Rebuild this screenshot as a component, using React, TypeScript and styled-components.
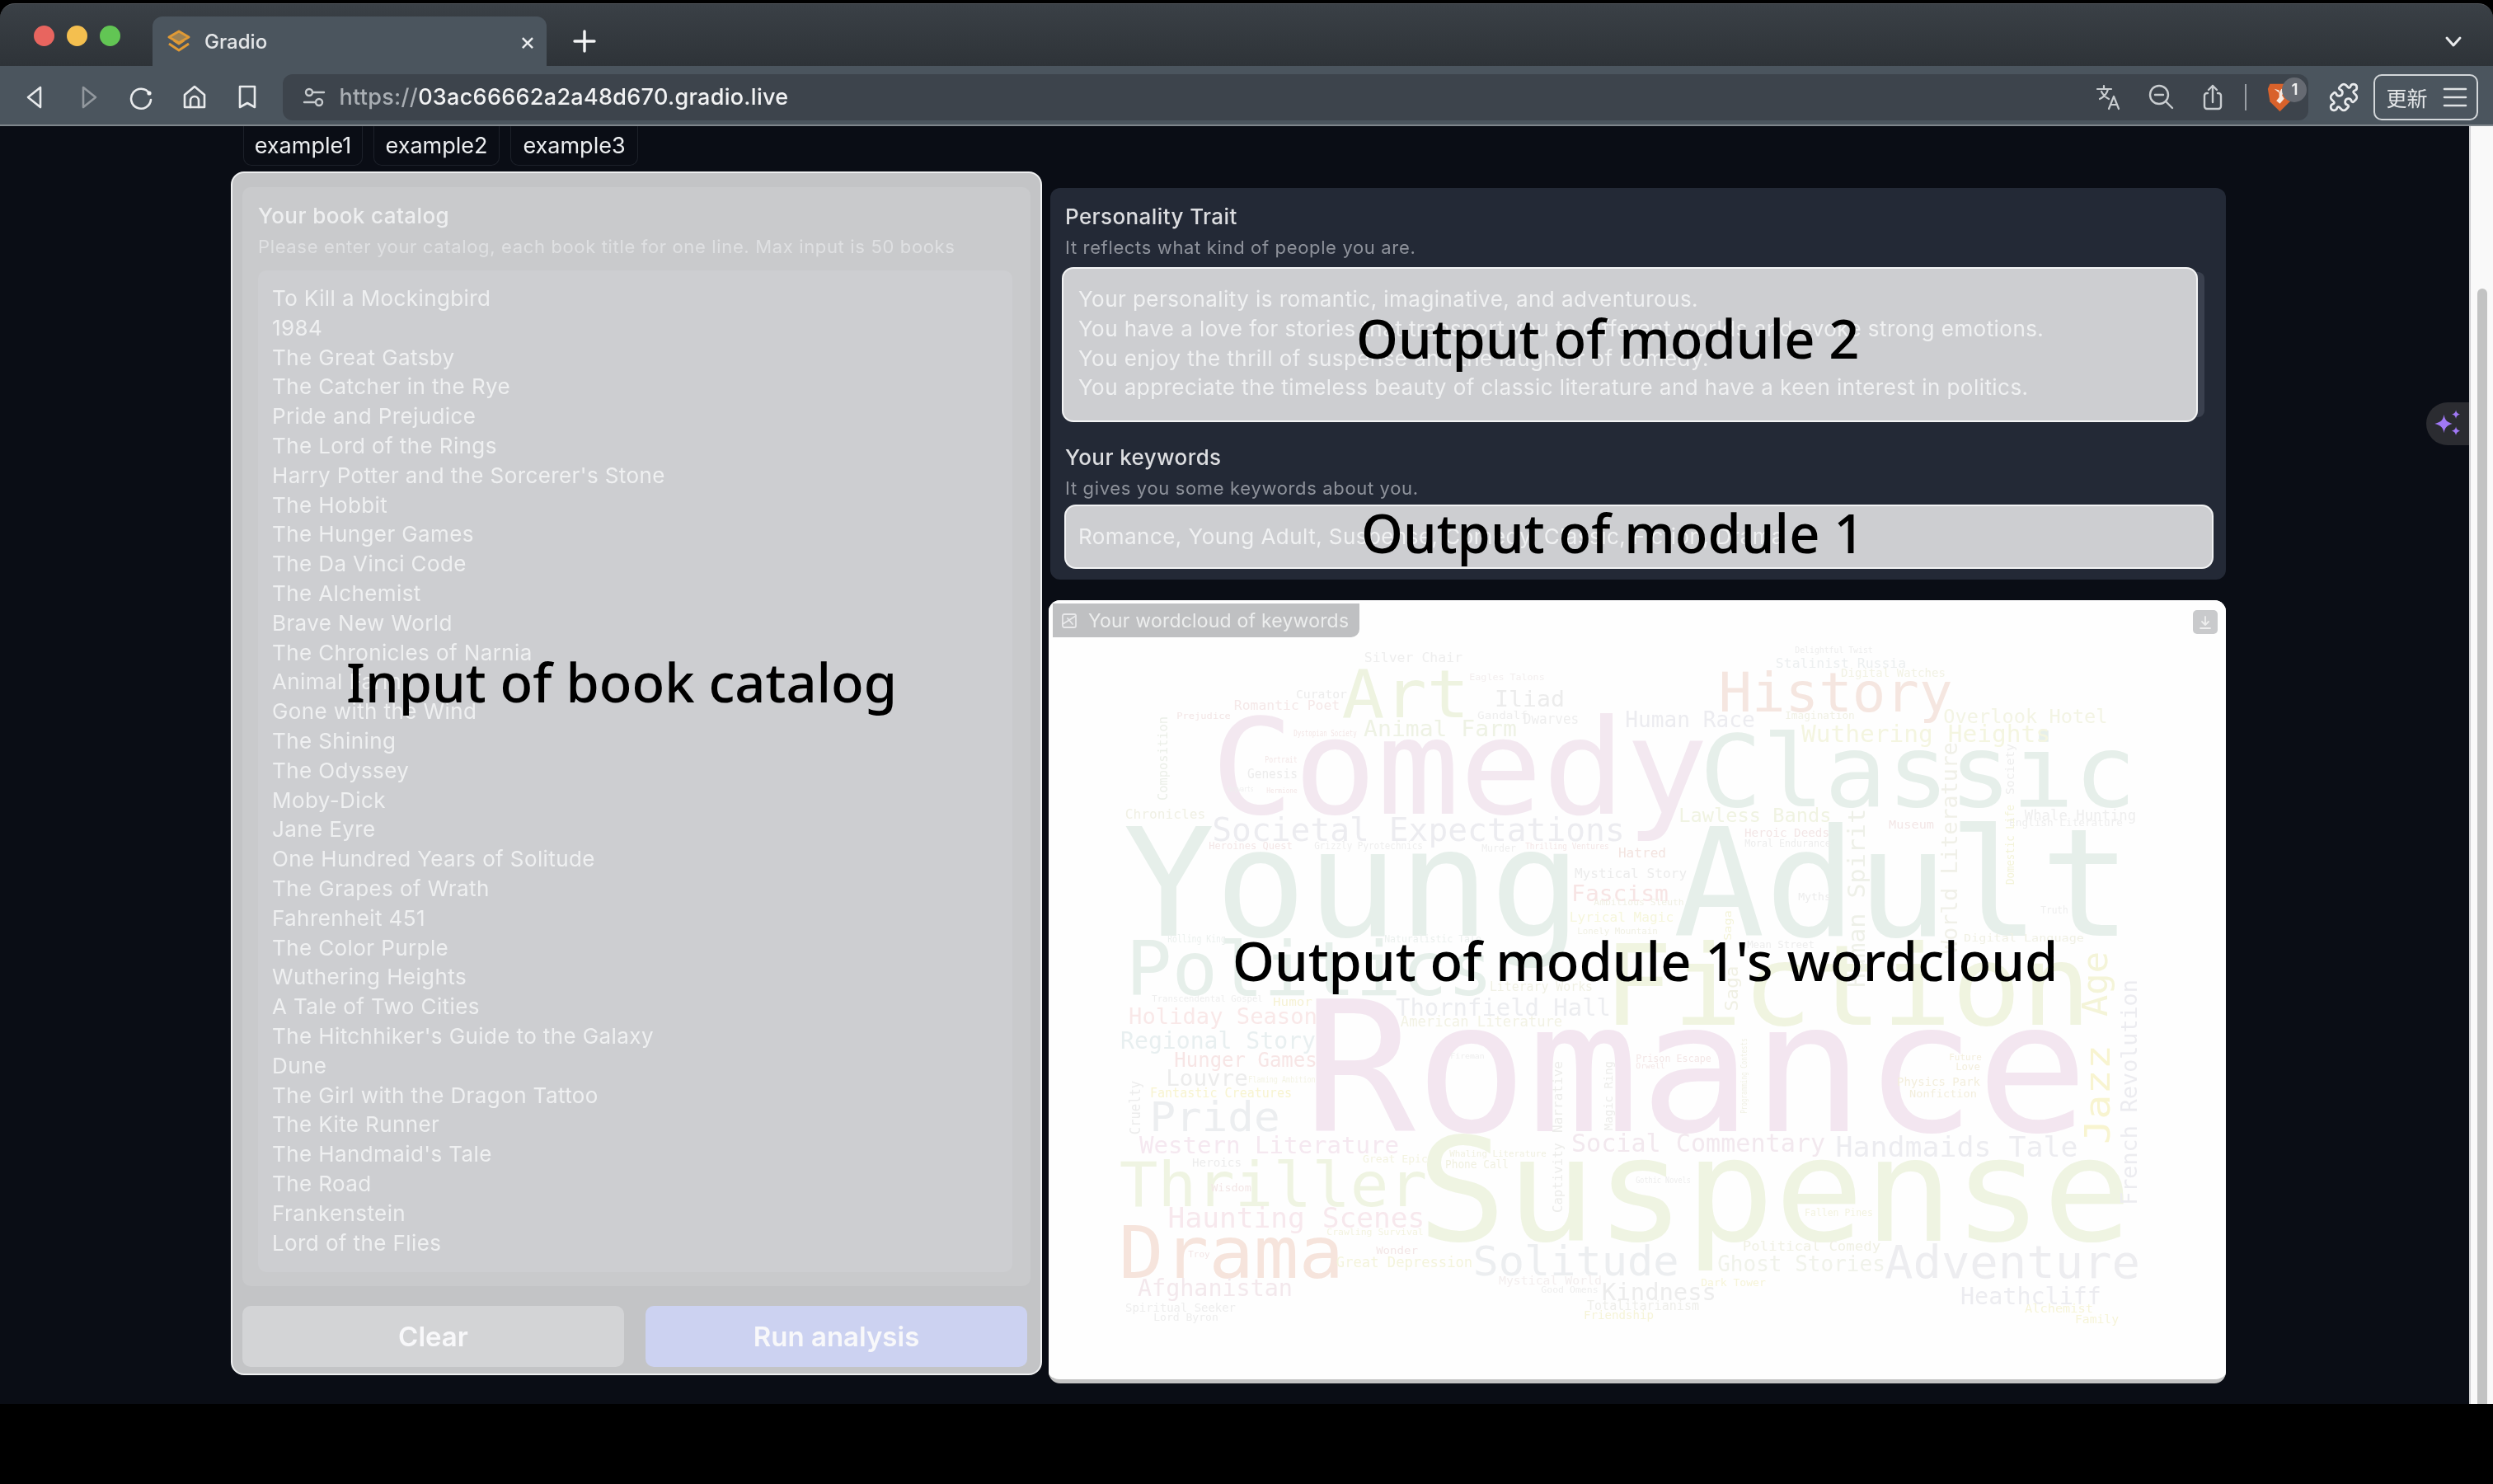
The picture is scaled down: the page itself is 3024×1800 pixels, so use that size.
import React from 'react';
import styled, { createGlobalStyle } from 'styled-components';
import { Puzzle as LucidePuzzle } from 'lucide-react';

const UI_FONT = `Inter, "Open Sans", "Liberation Sans", sans-serif`;

const Global = createGlobalStyle`
  html, body { margin: 0; padding: 0; background: #000; }
  * { box-sizing: border-box; }
  body { font-family: ${UI_FONT}; }
`;

const Root = styled.div`
  position: relative;
  width: 3024px;
  height: 1800px;
  overflow: hidden;
  background: #000;
`;

/* ---------- browser chrome ---------- */
const Chrome = styled.header`
  height: 153px;
  padding-top: 4px;
  display: flex;
  flex-direction: column;
  filter: blur(0.5px);
`;
const TabStrip = styled.div`
  height: 76px;
  display: flex;
  align-items: flex-end;
  background: linear-gradient(#3a4046, #2e3338);
  border-radius: 18px 18px 0 0;
  border-top: 1px solid #55595e;
  padding-left: 41px;
  padding-right: 36px;
`;
const Lights = styled.div`
  display: flex;
  gap: 15px;
  align-self: flex-start;
  margin-top: 26px;
  width: 144px;
`;
const Light = styled.span<{ $c: string }>`
  width: 25px;
  height: 25px;
  border-radius: 50%;
  background: ${p => p.$c};
`;
const Tab = styled.div`
  width: 478px;
  height: 60px;
  display: flex;
  align-items: center;
  padding: 0 11px 0 17px;
  background: #4b555e;
  border-radius: 12px 12px 0 0;
`;
const TabTitle = styled.span`
  margin-left: 16px;
  flex: 1;
  font-size: 24px;
  font-weight: 500;
  color: #e4e6e8;
`;
const TabClose = styled.span`
  font-size: 30px;
  line-height: 1;
  color: #eceef0;
  width: 24px;
  text-align: center;
`;
const NewTab = styled.div`
  margin-left: 32px;
  height: 60px;
  display: flex;
  align-items: center;
`;
const TabListBtn = styled.div`
  margin-left: auto;
  height: 60px;
  display: flex;
  align-items: center;
`;
const Toolbar = styled.div`
  height: 73px;
  display: flex;
  align-items: center;
  padding: 4px 17px 0 11px;
  background: #4b555e;
  border-bottom: 2px solid #7f868c;
`;
const NavBtn = styled.div`
  width: 64.3px;
  display: flex;
  justify-content: center;
  align-items: center;
`;
const UrlPill = styled.div`
  width: 2457px;
  height: 56px;
  margin-left: 11px;
  display: flex;
  align-items: center;
  background: #3d444c;
  border-radius: 12px;
  padding-left: 22px;
`;
const Url = styled.span`
  margin-left: 14px;
  flex: 1;
  font-size: 27px;
  font-weight: 500;
  letter-spacing: 0.3px;
  color: #f1f2f3;
`;
const UrlScheme = styled.span`
  color: #a9aeb3;
`;
const PillIcon = styled.div`
  width: 63px;
  display: flex;
  justify-content: center;
`;
const PillSep = styled.span`
  width: 2px;
  height: 32px;
  margin: 0 5px 0 8px;
  background: #9aa0a6;
`;
const BraveWrap = styled.div`
  position: relative;
  width: 70px;
  display: flex;
  justify-content: center;
`;
const BraveBadge = styled.span`
  position: absolute;
  left: 38px;
  top: -5px;
  width: 30px;
  height: 30px;
  border-radius: 50%;
  background: #666a72;
  color: #f0f0f0;
  font-size: 19px;
  font-weight: 600;
  display: flex;
  align-items: center;
  justify-content: center;
`;
const ExtBtn = styled.div`
  width: 79px;
  padding-left: 6px;
  display: flex;
  justify-content: center;
`;
const UpdateBtn = styled.div`
  width: 127px;
  height: 56px;
  border: 2px solid #d3d7da;
  border-radius: 10px;
  display: flex;
  align-items: center;
  justify-content: space-between;
  padding: 0 11px 0 13px;
  color: #e6e8ea;
  font-family: "Noto Sans CJK TC", sans-serif;
  font-size: 25px;
`;

/* ---------- page ---------- */
const Page = styled.main`
  position: relative;
  height: 1550px;
  display: flex;
  background: #0a0d15;
  filter: blur(0.5px);
`;
const Content = styled.div`
  flex: 1;
  padding-left: 280px;
  display: flex;
  flex-direction: column;
`;
const ExampleRow = styled.div`
  height: 48px;
  margin: 0 0 7px 15px;
  display: flex;
  gap: 13px;
`;
const ExampleChip = styled.div<{ $w: number }>`
  width: ${p => p.$w}px;
  display: flex;
  align-items: center;
  justify-content: center;
  color: #eceef0;
  font-size: 27px;
  border: 1px solid #1d212a;
  border-top: none;
  border-radius: 0 0 10px 10px;
`;
const Columns = styled.div`
  display: flex;
  gap: 6px;
  align-items: flex-start;
`;
const InputPanel = styled.section`
  width: 984px;
  height: 1460px;
  padding: 17px 12px 8px;
  display: flex;
  flex-direction: column;
  background: #c3c4c6;
  border: 2px solid #eff0f1;
  border-radius: 16px;
`;
const InputBlock = styled.div`
  height: 1333px;
  padding: 18px 22px 17px 19px;
  display: flex;
  flex-direction: column;
  background: #c9cacc;
  border-radius: 10px;
`;
const Label = styled.div<{ $c: string }>`
  height: 34px;
  line-height: 34px;
  font-size: 26px;
  font-weight: 500;
  letter-spacing: 0.4px;
  color: ${p => p.$c};
`;
const Info = styled.div<{ $c: string }>`
  height: 30px;
  line-height: 30px;
  margin-top: 5px;
  font-size: 22px;
  letter-spacing: 0.65px;
  color: ${p => p.$c};
`;
const CatalogBox = styled.div`
  height: 1215px;
  margin-top: 14px;
  padding: 16px 17px;
  background: #cdced1;
  border-radius: 10px;
`;
const CatalogLine = styled.div`
  height: 35.8px;
  line-height: 35.8px;
  font-size: 26px;
  letter-spacing: 0.4px;
  color: #eff0f1;
  white-space: nowrap;
`;
const ButtonRow = styled.div`
  margin-top: 24px;
  display: flex;
  gap: 26px;
`;
const ActionButton = styled.button<{ $primary?: boolean }>`
  width: 463px;
  height: 74px;
  border: none;
  border-radius: 10px;
  background: ${p => (p.$primary ? '#ccd2f1' : '#d3d4d6')};
  color: #f8f8fa;
  font-family: ${UI_FONT};
  font-size: 33px;
  font-weight: 600;
`;
const RightColumn = styled.div`
  width: 1432px;
  padding-top: 20px;
  display: flex;
  flex-direction: column;
  gap: 25px;
`;
const OutputCard = styled.section`
  width: 1426px;
  height: 475px;
  margin-left: 4px;
  padding: 18px 14px 13px;
  background: #232936;
  border-radius: 12px;
`;
const LabelInset = styled.div`
  padding-left: 4px;
`;
const OutputBox = styled.div<{ $w: number; $h: number; $mt: number; $ml?: number; $pl: number; $band?: boolean }>`
  width: ${p => p.$w}px;
  height: ${p => p.$h}px;
  margin-top: ${p => p.$mt}px;
  margin-left: ${p => p.$ml ?? 0}px;
  padding: 19px 10px 19px ${p => p.$pl}px;
  background: #cdced1;
  border: 2px solid #f2f3f4;
  border-radius: 14px;
  ${p => (p.$band ? 'box-shadow: 14px 0 0 -6px #3a404e;' : '')}
`;
const OutputLine = styled.div`
  height: 35.8px;
  line-height: 35.8px;
  font-size: 26px;
  letter-spacing: 0.45px;
  color: #f0f1f2;
  white-space: nowrap;
`;
const SectionGap = styled.div`
  height: 26px;
`;
const CloudPanel = styled.section`
  position: relative;
  width: 1428px;
  height: 950px;
  margin-left: 2px;
  background: #fefefe;
  border-radius: 14px;
  border-bottom: 5px solid #c4c4c4;
  overflow: hidden;
`;
const CloudSvg = styled.svg`
  display: block;
  width: 100%;
  height: 100%;
  filter: blur(0.7px);
`;
const CloudLabel = styled.div`
  position: absolute;
  left: 5px;
  top: 4px;
  width: 372px;
  height: 41px;
  padding-left: 10px;
  display: flex;
  align-items: center;
  gap: 13px;
  background: #bfc0c2;
  border-radius: 0 0 10px 0;
  color: #eceded;
  font-size: 23px;
  letter-spacing: 0.2px;
`;
const DownloadBtn = styled.div`
  position: absolute;
  right: 10px;
  top: 12px;
  width: 30px;
  height: 29px;
  background: #c9cacc;
  border-radius: 5px;
  display: flex;
  align-items: center;
  justify-content: center;
`;
const Scrollbar = styled.aside`
  width: 29px;
  padding: 197px 7px 0 8px;
  background: #f9f9f9;
  border-left: 2px solid #d0d1d3;
`;
const ScrollThumb = styled.div`
  height: 100%;
  background: #c2c3c3;
  border-radius: 7px 7px 0 0;
`;
const SparkleTab = styled.div`
  position: absolute;
  right: 29px;
  top: 335px;
  width: 52px;
  height: 52px;
  background: #2b2c31;
  border-radius: 26px 0 0 26px;
  display: flex;
  align-items: center;
  justify-content: center;
`;
const Note = styled.div<{ $x: number; $y: number }>`
  position: absolute;
  left: ${p => p.$x}px;
  top: ${p => p.$y}px;
  font-family: "Noto Sans", "Open Sans", sans-serif;
  font-size: 65px;
  font-weight: 500;
  line-height: 1;
  color: #000;
  white-space: nowrap;
  transform: translateY(-50%);
`;

/* ---------- icons ---------- */
const Stroke: React.FC<{ s?: string; w?: number; o?: number; size?: number; children: React.ReactNode; vb?: string }> = ({ s = '#e8eaec', w = 2.6, o = 1, size = 32, vb = '0 0 32 32', children }) => (
  <svg width={size} height={size} viewBox={vb} fill="none" stroke={s} strokeWidth={w} strokeLinecap="round" strokeLinejoin="round" opacity={o}>
    {children}
  </svg>
);
const Favicon = () => (
  <svg width="30" height="30" viewBox="0 0 30 30" fill="none" stroke="#e09a35" strokeWidth="3" strokeLinejoin="round">
    <path d="M15 3 27 10 15 17 3 10Z" fill="#e9ad4e" fillOpacity=".5" />
    <path d="M3 18l12 8 12-8" />
    <path d="M9 14l6 4 6-4" />
  </svg>
);
const Chevron = () => (
  <Stroke size={24} vb="0 0 24 24" w={3}><path d="M4 8l8 9 8-9" /></Stroke>
);
const Plus = () => (
  <Stroke size={28} vb="0 0 28 28" s="#f4f5f6" w={3.4}><path d="M14 2v24M2 14h24" /></Stroke>
);
const Back = () => <Stroke><path d="M22 4 7 16l15 12z" /></Stroke>;
const Forward = () => <Stroke o={0.45}><path d="M10 4l15 12-15 12z" /></Stroke>;
const Reload = () => (
  <Stroke><path d="M25 11A12 12 0 1 0 27 19" /><circle cx="25" cy="11" r="2.6" fill="#f4f5f6" stroke="none" /></Stroke>
);
const Home = () => (
  <Stroke><path d="M4 28V13L16 3l12 10v15z" /><path d="M11 28v-8a5 5 0 0 1 10 0v8" /></Stroke>
);
const Bookmark = () => <Stroke><path d="M7 3h18v25l-9-5-9 5z" /></Stroke>;
const Tune = () => (
  <Stroke s="#c6cacd" w={2.4}>
    <circle cx="10" cy="10" r="4" /><path d="M15 10h13M4 22h13" /><circle cx="22" cy="22" r="4" />
  </Stroke>
);
const Translate = () => (
  <Stroke s="#c9cdd0" w={2.2} size={34} vb="0 0 34 34">
    <path d="M3 7h17M11 3v4M6 19c6-3 9-7 10-12M8 10c2 4 5 7 9 9" /><path d="M17 31l6-15 6 15M19 26h8" />
  </Stroke>
);
const ZoomOut = () => (
  <Stroke s="#c9cdd0" w={2.4}><circle cx="14" cy="13" r="11" /><path d="M9 13h10M22 21l8 8" /></Stroke>
);
const Share = () => (
  <Stroke s="#c9cdd0" w={2.4}>
    <path d="M10 11H9a3 3 0 0 0-3 3v13a3 3 0 0 0 3 3h14a3 3 0 0 0 3-3V14a3 3 0 0 0-3-3h-1" /><path d="M16 22V2M11 7l5-5 5 5" />
  </Stroke>
);
const Brave = () => (
  <svg width="31" height="38" viewBox="0 0 36 44">
    <path d="M4 3h28l3 7-3 18-14 14L4 28 1 10z" fill="#d9622b" />
    <path d="M10 10l7 2v10l-4 5 5 4 6-7-3-5 4-7-5-2-3 6z" fill="#f7e9df" />
  </svg>
);
const Sparkles = () => (
  <svg width="38" height="38" viewBox="0 0 34 34" fill="#a078f5">
    <path d="M13 7c1 6 3 8 9 10-6 2-8 4-9 10-1-6-3-8-10-10 7-2 9-4 10-10z" />
    <path d="M26 2c.6 3 1.6 4 4.6 4.8-3 .8-4 1.8-4.6 4.8-.6-3-1.6-4-4.6-4.8 3-.8 4-1.8 4.6-4.8z" />
    <path d="M26 20c.6 3 1.6 4 4.6 4.8-3 .8-4 1.8-4.6 4.8-.6-3-1.6-4-4.6-4.8 3-.8 4-1.8 4.6-4.8z" />
  </svg>
);
const Hamburger = () => (
  <Stroke size={30} vb="0 0 30 30" w={2.6} s="#dfe2e4"><path d="M2 5h26M2 15h26M2 25h26" /></Stroke>
);
const PictureIcon = () => (
  <Stroke size={20} vb="0 0 20 20" s="#e8e8ea" w={1.8}><rect x="2" y="2" width="16" height="16" rx="2" /><path d="M2 14l16-10M8 7l6 7" /></Stroke>
);
const DownloadIcon = () => (
  <Stroke size={18} vb="0 0 18 18" s="#eeeeee" w={1.8}><path d="M9 2v10M5 8l4 4 4-4M3 16h12" /></Stroke>
);

/* ---------- data ---------- */
const BOOKS = ['To Kill a Mockingbird', '1984', 'The Great Gatsby', 'The Catcher in the Rye', 'Pride and Prejudice', 'The Lord of the Rings', "Harry Potter and the Sorcerer's Stone", 'The Hobbit', 'The Hunger Games', 'The Da Vinci Code', 'The Alchemist', 'Brave New World', 'The Chronicles of Narnia', 'Animal Farm', 'Gone with the Wind', 'The Shining', 'The Odyssey', 'Moby-Dick', 'Jane Eyre', 'One Hundred Years of Solitude', 'The Grapes of Wrath', 'Fahrenheit 451', 'The Color Purple', 'Wuthering Heights', 'A Tale of Two Cities', "The Hitchhiker's Guide to the Galaxy", 'Dune', 'The Girl with the Dragon Tattoo', 'The Kite Runner', "The Handmaid's Tale", 'The Road', 'Frankenstein', 'Lord of the Flies'];

const PERSONALITY = ['Your personality is romantic, imaginative, and adventurous.', 'You have a love for stories that transport you to different worlds and evoke strong emotions.', 'You enjoy the thrill of suspense and the laughter of comedy.', 'You appreciate the timeless beauty of classic literature and have a keen interest in politics.'];

type Word = [string, number, number, number, number, string, boolean?];
/* text, x, baseline y, ink length, font size, colour, vertical */
const WORDS: Word[] = [
  ['Young Adult', 1375, 1135, 1198, 182, '#e6efea'],
  ['Comedy', 1480, 987, 581, 161, '#f3e8f0'],
  ['Classic', 2070, 978, 513, 122, '#e6efea'],
  ['Art', 1633, 870, 144, 80, '#eef3e0'],
  ['History', 2089, 863, 275, 65, '#f5e6e0'],
  ['Politics', 1372, 1207, 433, 90, '#e6efea'],
  ['Fiction', 1954, 1243, 573, 136, '#f0f4e0'],
  ['Romance', 1596, 1372, 922, 219, '#f3e6f0'],
  ['Suspense', 1731, 1505, 843, 175, '#eff4e2'],
  ['Thriller', 1363, 1463, 363, 75, '#eff4e2'],
  ['Drama', 1363, 1550, 261, 87, '#f6e4dc'],
  ['Adventure', 2290, 1550, 302, 56, '#ededf0'],
  ['Solitude', 1790, 1547, 243, 50, '#eceef0'],
  ['Pride', 1398, 1372, 151, 50, '#eceef0'],
  ['Societal Expectations', 1473, 1020, 495, 39, '#ececf0'],
  ['Wuthering Heights', 2187, 900, 298, 29, '#f4f5e0'],
  ['Overlook Hotel', 2359, 877, 196, 23, '#f3f4e4'],
  ['Human Race', 1973, 882, 154, 26, '#ececf0'],
  ['Iliad', 1815, 857, 81, 27, '#ececec'],
  ['Animal Farm', 1656, 893, 182, 27, '#eef2e4'],
  ['Silver Chair', 1656, 803, 117, 16, '#eeeeee'],
  ['Stalinist Russia', 2155, 810, 156, 16, '#eceff0'],
  ['Digital Watches', 2234, 821, 125, 14, '#f2f2e4'],
  ['Delightful Twist', 2178, 792, 93, 10, '#eeeeee'],
  ['Curator', 1573, 847, 60, 14, '#ececec'],
  ['Romantic Poet', 1498, 861, 126, 16, '#f5e8e8'],
  ['Eagles Talons', 1783, 825, 90, 10, '#f3eeee'],
  ['Lawless Bands', 2038, 997, 182, 23, '#f0f3e2'],
  ['Whale Hunting', 2457, 995, 133, 17, '#eeeeee'],
  ['Chronicles', 1366, 993, 95, 16, '#f0f0e4'],
  ['Genesis', 1514, 944, 59, 15, '#ececec'],
  ['Fascism', 1908, 1093, 114, 27, '#f7e4e4'],
  ['Mystical Story', 1911, 1065, 134, 16, '#ececec'],
  ['Hatred', 1964, 1040, 56, 15, '#f3e4e0'],
  ['Lyrical Magic', 1905, 1118, 124, 16, '#f6f6dc'],
  ['Ambitious Sleuth', 1934, 1098, 108, 10, '#f0f0e4'],
  ['Lonely Mountain', 1914, 1133, 96, 11, '#f0f0e4'],
  ['Literary Works', 1808, 1202, 123, 15, '#f0f0e4'],
  ['Heroic Deeds', 2117, 1015, 101, 14, '#f3e6e6'],
  ['Moral Endurance', 2117, 1027, 103, 12, '#ededed'],
  ['Museum', 2292, 1005, 53, 14, '#f3e6e6'],
  ['English Literature', 2438, 1002, 136, 13, '#eeeeee'],
  ['Myths', 2182, 1092, 38, 12, '#ececec'],
  ['Imagination', 2166, 872, 83, 12, '#f0f0e4'],
  ['Truth', 2476, 1108, 32, 12, '#eeeeee'],
  ['Prejudice', 1428, 872, 64, 11, '#f3e6e6'],
  ['Gandalf', 1793, 872, 59, 13, '#eeeeee'],
  ['Dwarves', 1849, 878, 65, 17, '#eeeeee'],
  ['Dystopian Society', 1570, 893, 75, 10, '#f3e6e6'],
  ['Hogwarts', 1490, 960, 30, 9, '#eeeeee'],
  ['Hermione', 1537, 962, 36, 9, '#f3e6e6'],
  ['Portrait', 1535, 925, 38, 10, '#f3e6e6'],
  ['Heroines Quest', 1467, 1030, 100, 12, '#f3e6e6'],
  ['Grizzly Pyrotechnics', 1595, 1030, 130, 12, '#eeeeee'],
  ['Murder', 1798, 1033, 40, 12, '#eeeeee'],
  ['Thrilling Ventures', 1851, 1030, 100, 11, '#f3e6e6'],
  ['Rolling King', 1417, 1143, 69, 12, '#ebf0ee'],
  ['Naturalistic Tale', 1680, 1143, 116, 12, '#ebf0ee'],
  ['Digital Language', 2383, 1142, 144, 13, '#f0f0e4'],
  ['Mean Street', 2120, 1150, 80, 12, '#ededed'],
  ['Transcendental Gospel', 1398, 1215, 133, 11, '#eeeeee'],
  ['Humor', 1545, 1220, 46, 14, '#f6f2d4'],
  ['American Literature', 1700, 1245, 194, 17, '#f2f2e4'],
  ['Holiday Season', 1371, 1242, 225, 27, '#f9e8e8'],
  ['Regional Story', 1361, 1272, 233, 28, '#e8eff0'],
  ['Hunger Games', 1426, 1294, 170, 24, '#f7e5e5'],
  ['Louvre', 1416, 1317, 96, 26, '#ececec'],
  ['Flaming Ambition', 1515, 1313, 80, 10, '#f3f3e4'],
  ['Thornfield Hall', 1695, 1232, 257, 28, '#ecedf0'],
  ['Fantastic Creatures', 1396, 1331, 170, 15, '#f8f4d0'],
  ['Western Literature', 1384, 1399, 311, 29, '#f5e8f0'],
  ['Social Commentary', 1908, 1397, 304, 30, '#f2e8ee'],
  ['Handmaids Tale', 2229, 1403, 289, 34, '#ececf0'],
  ['Haunting Scenes', 1419, 1489, 307, 34, '#f7e8ed'],
  ['Ghost Stories', 2085, 1542, 200, 26, '#f0f2ea'],
  ['Kindness', 1945, 1577, 135, 28, '#ececec'],
  ['Heathcliff', 2380, 1582, 167, 28, '#ececf0'],
  ['Afghanistan', 1382, 1572, 184, 28, '#f3e8ec'],
  ['Great Depression', 1622, 1537, 163, 17, '#f4f4dc'],
  ['Mystical World', 1819, 1558, 123, 14, '#f3eeee'],
  ['Dark Tower', 2064, 1560, 77, 12, '#f6f4d8'],
  ['Political Comedy', 2115, 1517, 165, 16, '#f0f0e4'],
  ['Spiritual Seeker', 1366, 1591, 132, 14, '#ededed'],
  ['Lord Byron', 1400, 1602, 77, 12, '#ededed'],
  ['Totalitarianism', 1926, 1589, 134, 15, '#eeeeea'],
  ['Friendship', 1922, 1600, 83, 14, '#f6f4d8'],
  ['Alchemist', 2457, 1592, 81, 14, '#f6f4d8'],
  ['Family', 2518, 1605, 51, 14, '#f6f4d8'],
  ['Good Omens', 1870, 1568, 68, 10, '#eeeeee'],
  ['Phone Call', 1754, 1417, 75, 14, '#f0f0e0'],
  ['Whaling Literature', 1759, 1403, 116, 11, '#f0f0e0'],
  ['Physics Park', 2302, 1317, 99, 14, '#f3eedc'],
  ['Nonfiction', 2317, 1331, 80, 13, '#f3eedc'],
  ['Fireman', 1760, 1284, 40, 9, '#ededed'],
  ['Prison Escape', 1985, 1288, 90, 12, '#f3e6e6'],
  ['Orwell', 1985, 1296, 34, 9, '#f3e6e6'],
  ['Future', 2365, 1286, 38, 10, '#f3eedc'],
  ['Love', 2373, 1298, 28, 12, '#f3eedc'],
  ['Heroics', 1447, 1415, 58, 14, '#ececec'],
  ['Great Epic', 1654, 1410, 77, 13, '#f3f3e0'],
  ['Fallen Pines', 2190, 1475, 81, 13, '#f3f3e0'],
  ['Gothic Novels', 1985, 1435, 65, 11, '#ededed'],
  ['Wisdom', 1470, 1445, 47, 12, '#f3e6e6'],
  ['Crawling Survival', 1610, 1498, 116, 11, '#f3f3e0'],
  ['Troy', 1442, 1525, 25, 11, '#f3e6e6'],
  ['Wonder', 1670, 1521, 49, 12, '#f3e6e6'],
  ['Human Spirit', 2262, 1196, 213, 29, '#eef0e8', true],
  ['World Literature', 2374, 1155, 253, 26, '#f0f0e8', true],
  ['Society', 2443, 963, 60, 14, '#ededed', true],
  ['Domestic Life', 2443, 1072, 95, 14, '#f3f3d8', true],
  ['Composition', 1416, 970, 100, 15, '#ebefe8', true],
  ['Jazz', 2559, 1385, 115, 42, '#f8f4d0', true],
  ['Age', 2556, 1230, 73, 42, '#f4f4d8', true],
  ['French Revolution', 2592, 1460, 270, 26, '#ececf0', true],
  ['Cruelty', 1383, 1375, 63, 17, '#ececec', true],
  ['Captivity', 1895, 1470, 83, 15, '#ececea', true],
  ['Narrative', 1895, 1373, 85, 15, '#ececea', true],
  ['Magic Ring', 1956, 1370, 82, 14, '#ececea', true],
  ['Programming Contests', 2119, 1350, 90, 11, '#f0f0e4', true],
  ['Saga', 2100, 1140, 35, 12, '#f3f3d8', true],
  ['Saga', 2108, 1225, 52, 22, '#f0f0e4', true],
];

const WordCloud = () => (
  <CloudSvg viewBox="1272 728 1428 945" preserveAspectRatio="none">
    <rect x="1272" y="728" width="1428" height="945" fill="#fefefe" />
    {WORDS.map(([t, x, y, len, fs, c, v], i) => {
      const bearing = fs * 0.07;
      const px = v ? x : x - bearing;
      const py = v ? y + bearing : y;
      return (
        <text
          key={i}
          x={px}
          y={py}
          fontFamily={'"DejaVu Sans Mono", "Liberation Mono", monospace'}
          fontSize={fs}
          fill={c}
          textLength={len + bearing * 2}
          lengthAdjust="spacingAndGlyphs"
          transform={v ? `rotate(-90 ${px} ${py})` : undefined}
        >
          {t}
        </text>
      );
    })}
  </CloudSvg>
);

export default function App() {
  return (
    <Root>
      <Global />
      <Chrome>
        <TabStrip>
          <Lights>
            <Light $c="#e8655f" />
            <Light $c="#f4bf4f" />
            <Light $c="#62c554" />
          </Lights>
          <Tab>
            <Favicon />
            <TabTitle>Gradio</TabTitle>
            <TabClose>×</TabClose>
          </Tab>
          <NewTab><Plus /></NewTab>
          <TabListBtn><Chevron /></TabListBtn>
        </TabStrip>
        <Toolbar>
          <NavBtn><Back /></NavBtn>
          <NavBtn><Forward /></NavBtn>
          <NavBtn><Reload /></NavBtn>
          <NavBtn><Home /></NavBtn>
          <NavBtn><Bookmark /></NavBtn>
          <UrlPill>
            <Tune />
            <Url><UrlScheme>https://</UrlScheme>03ac66662a2a48d670.gradio.live</Url>
            <PillIcon><Translate /></PillIcon>
            <PillIcon><ZoomOut /></PillIcon>
            <PillIcon><Share /></PillIcon>
            <PillSep />
            <BraveWrap><Brave /><BraveBadge>1</BraveBadge></BraveWrap>
          </UrlPill>
          <ExtBtn><LucidePuzzle size={38} color="#e8eaec" strokeWidth={1.7} /></ExtBtn>
          <UpdateBtn>更新<Hamburger /></UpdateBtn>
        </Toolbar>
      </Chrome>
      <Page>
        <Content>
          <ExampleRow>
            <ExampleChip $w={145}>example1</ExampleChip>
            <ExampleChip $w={153}>example2</ExampleChip>
            <ExampleChip $w={155}>example3</ExampleChip>
          </ExampleRow>
          <Columns>
            <InputPanel>
              <InputBlock>
                <Label $c="#eeeff0">Your book catalog</Label>
                <Info $c="#dfe0e2">Please enter your catalog, each book title for one line. Max input is 50 books</Info>
                <CatalogBox>
                  {BOOKS.map(b => <CatalogLine key={b}>{b}</CatalogLine>)}
                </CatalogBox>
              </InputBlock>
              <ButtonRow>
                <ActionButton>Clear</ActionButton>
                <ActionButton $primary>Run analysis</ActionButton>
              </ButtonRow>
            </InputPanel>
            <RightColumn>
              <OutputCard>
                <LabelInset>
                  <Label $c="#dcdde0">Personality Trait</Label>
                  <Info $c="#8e929b">It reflects what kind of people you are.</Info>
                </LabelInset>
                <OutputBox $w={1378} $h={188} $mt={9} $pl={18} $band>
                  {PERSONALITY.map(l => <OutputLine key={l}>{l}</OutputLine>)}
                </OutputBox>
                <SectionGap />
                <LabelInset>
                  <Label $c="#dcdde0">Your keywords</Label>
                  <Info $c="#8e929b">It gives you some keywords about you.</Info>
                </LabelInset>
                <OutputBox $w={1394} $h={78} $mt={5} $ml={3} $pl={15}>
                  <OutputLine>Romance, Young Adult, Suspense, Comedy, Classic, Fiction, Drama</OutputLine>
                </OutputBox>
              </OutputCard>
              <CloudPanel>
                <WordCloud />
                <CloudLabel><PictureIcon />Your wordcloud of keywords</CloudLabel>
                <DownloadBtn><DownloadIcon /></DownloadBtn>
              </CloudPanel>
            </RightColumn>
          </Columns>
        </Content>
        <Scrollbar><ScrollThumb /></Scrollbar>
        <SparkleTab><Sparkles /></SparkleTab>
      </Page>
      <Note $x={420} $y={827}>Input of book catalog</Note>
      <Note $x={1645} $y={410}>Output of module 2</Note>
      <Note $x={1651} $y={646}>Output of module 1</Note>
      <Note $x={1495} $y={1165}>Output of module 1's wordcloud</Note>
    </Root>
  );
}
